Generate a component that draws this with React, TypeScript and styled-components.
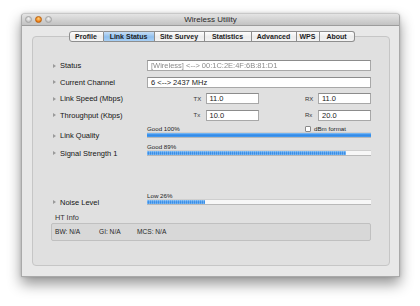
import React from "react";
import styled, { createGlobalStyle } from "styled-components";

const GlobalStyle = createGlobalStyle`
body {
    margin: 0;
    background: #ffffff;
    font-family: "Liberation Sans", Arial, sans-serif;
    color: #222;
}
`;

const Page = styled.div`
padding: 13px 0 0 21px;
width: 420px;
height: 306px;
box-sizing: border-box;
`;

const Window = styled.div`
width: 379px;
height: 264px;
box-sizing: border-box;
display: flex;
flex-direction: column;
background: #e8e8e8;
border: 1px solid #a9a9a9;
border-top-color: #c8c8c8;
border-radius: 4px 4px 0 0;
box-shadow: 0 7px 14px rgba(0, 0, 0, 0.42), 0 0 3px rgba(0, 0, 0, 0.15);
`;

const TitleBar = styled.div`
height: 11px;
flex: none;
display: flex;
align-items: center;
position: relative;
padding-left: 3px;
gap: 3px;
background: linear-gradient(#e4e4e4, #c2c2c2);
border-bottom: 1px solid #9c9c9c;
border-radius: 3px 3px 0 0;
`;

const Light = styled.span<{ $active?: boolean }>`
width: 7px;
height: 7px;
border-radius: 50%;
box-sizing: border-box;
background: ${(p) =>
    p.$active
        ? "radial-gradient(circle at 50% 35%, #ffd27a, #f07a10 70%, #c25a00)"
        : "radial-gradient(circle at 50% 35%, #f4f4f4, #c0c0c0 75%)"};
border: 1px solid ${(p) => (p.$active ? "#b86412" : "#a5a5a5")};
`;

const Title = styled.div`
position: absolute;
left: 0;
right: 0;
top: 0;
text-align: center;
font-size: 8px;
line-height: 11px;
color: #2a2a2a;
`;

const Body = styled.div`
flex: 1;
display: flex;
flex-direction: column;
padding: 5px 9px 10px 10px;
`;

const Tabs = styled.div`
display: flex;
justify-content: center;
position: relative;
z-index: 1;
margin-left: 1px;
`;

const Tab = styled.div<{ $w: number; $active?: boolean }>`
width: ${(p) => p.$w}px;
height: 11px;
box-sizing: border-box;
display: flex;
align-items: center;
justify-content: center;
font-size: 7px;
font-weight: bold;
color: #1e1e1e;
background: ${(p) =>
    p.$active
        ? "linear-gradient(#c6def6, #8fbfee 55%, #a8cff4)"
        : "linear-gradient(#fefefe, #ececec 55%, #f4f4f4)"};
border: 1px solid #8e8e8e;
border-left: none;
&:first-child {
    border-left: 1px solid #8e8e8e;
    border-radius: 3px 0 0 3px;
}
&:last-child {
    border-radius: 0 3px 3px 0;
}
`;

const Group = styled.div`
flex: 1;
margin-top: -6px;
background: #e0e0e0;
border: 1px solid #c6c6c6;
border-radius: 4px;
padding: 23px 18px 0 20px;
`;

const Grid = styled.div`
display: grid;
grid-template-columns: 94px 1fr;
row-gap: 5.5px;
align-items: center;
`;

const Label = styled.div<{ $drop?: number }>`
display: flex;
align-items: center;
gap: 4px;
font-size: 7.5px;
color: #141414;
align-self: ${(p) => (p.$drop !== undefined ? "end" : "center")};
margin-bottom: ${(p) => p.$drop ?? 0}px;
&::before {
    content: "";
    width: 0;
    height: 0;
    border-left: 3px solid #9a9a9a;
    border-top: 2.5px solid transparent;
    border-bottom: 2.5px solid transparent;
}
`;

const Field = styled.div<{ $blur?: boolean }>`
height: 11px;
box-sizing: border-box;
background: #ffffff;
border: 1px solid #a8a8a8;
border-top-color: #8c8c8c;
padding-left: 3px;
font-size: 7.5px;
line-height: 9px;
white-space: nowrap;
overflow: hidden;
color: ${(p) => (p.$blur ? "#8a8a8a" : "#1a1a1a")};
filter: ${(p) => (p.$blur ? "blur(0.55px)" : "none")};
`;

const Pair = styled.div`
display: grid;
grid-template-columns: 1fr 12px 53px 1fr 13px 53px;
align-items: center;
`;

const Small = styled.span`
font-size: 6px;
color: #333;
`;

const Meter = styled.div`
display: flex;
flex-direction: column;
`;

const Caption = styled.div`
display: flex;
justify-content: space-between;
align-items: flex-end;
height: 6px;
line-height: 6px;
font-size: 6.2px;
color: #222;
`;

const Check = styled.span`
display: flex;
align-items: center;
gap: 3px;
margin-right: 25px;
&::before {
    content: "";
    width: 6px;
    height: 6px;
    box-sizing: border-box;
    background: #fff;
    border: 1px solid #8a8a8a;
    border-radius: 1px;
}
`;

const Track = styled.div`
height: 6px;
box-sizing: border-box;
background: #f7f7f7;
border-top: 1px solid #cfcfcf;
border-bottom: 1px solid #b9b9b9;
`;

const Fill = styled.div<{ $pattern?: boolean }>`
height: 100%;
background: ${(p) =>
    p.$pattern
        ? "repeating-linear-gradient(90deg, rgba(255,255,255,0.25) 0 1px, transparent 1px 2px), linear-gradient(#7cbcf6, #2d86e4 50%, #59a6f0)"
        : "linear-gradient(#86c2f8, #2c86e6 50%, #4b9ef0)"};
`;

const Spacer = styled.div<{ $h: number }>`
grid-column: 1 / -1;
height: ${(p) => p.$h}px;
`;

const HtTitle = styled.div`
margin: 8px 0 0 2px;
font-size: 7.3px;
color: #333;
`;

const HtBox = styled.div`
margin: 1px 0 0 -2px;
height: 18px;
box-sizing: border-box;
display: flex;
align-items: center;
padding-left: 3px;
background: #d8d8d8;
border: 1px solid #c0c0c0;
border-radius: 2px;
font-size: 6.6px;
color: #262626;
`;

const HtItem = styled.span<{ $w: number }>`
width: ${(p) => p.$w}px;
`;

const tabs = [
    { name: "Profile", w: 35 },
    { name: "Link Status", w: 51, active: true },
    { name: "Site Survey", w: 50 },
    { name: "Statistics", w: 47 },
    { name: "Advanced", w: 45 },
    { name: "WPS", w: 23 },
    { name: "About", w: 35 },
];

const Bar: React.FC<{ caption: string; value: number; pattern?: boolean; extra?: React.ReactNode }> = ({
    caption,
    value,
    pattern,
    extra,
}) => (
    <Meter>
        <Caption>
            <span>{caption}</span>
            {extra}
        </Caption>
        <Track>
            <Fill $pattern={pattern} style={{ width: `${value}%` }} />
        </Track>
    </Meter>
);

export default function App() {
    return (
        <Page>
            <GlobalStyle />
            <Window>
                <TitleBar>
                    <Light />
                    <Light $active />
                    <Light />
                    <Title>Wireless Utility</Title>
                </TitleBar>
                <Body>
                    <Tabs>
                        {tabs.map((t) => (
                            <Tab key={t.name} $w={t.w} $active={t.active}>
                                {t.name}
                            </Tab>
                        ))}
                    </Tabs>
                    <Group>
                        <Grid>
                            <Label>Status</Label>
                            <Field $blur>{"[Wireless] <--> 00:1C:2E:4F:6B:81:D1"}</Field>

                            <Label>Current Channel</Label>
                            <Field>{"6 <--> 2437 MHz"}</Field>

                            <Label>Link Speed (Mbps)</Label>
                            <Pair>
                                <span />
                                <Small>TX</Small>
                                <Field>11.0</Field>
                                <span />
                                <Small>RX</Small>
                                <Field>11.0</Field>
                            </Pair>

                            <Label>Throughput (Kbps)</Label>
                            <Pair>
                                <span />
                                <Small>Tx</Small>
                                <Field>10.0</Field>
                                <span />
                                <Small>Rx</Small>
                                <Field>20.0</Field>
                            </Pair>

                            <Label $drop={-2}>Link Quality</Label>
                            <Bar caption="Good 100%" value={100} extra={<Check>dBm format</Check>} />

                            <Label $drop={-2}>Signal Strength 1</Label>
                            <Bar caption="Good 89%" value={89} pattern />

                            <Spacer $h={26} />

                            <Label $drop={-2}>Noise Level</Label>
                            <Bar caption="Low 26%" value={26} pattern />
                        </Grid>
                        <HtTitle>HT Info</HtTitle>
                        <HtBox>
                            <HtItem $w={44}>BW: N/A</HtItem>
                            <HtItem $w={38}>GI: N/A</HtItem>
                            <HtItem $w={50}>MCS: N/A</HtItem>
                        </HtBox>
                    </Group>
                </Body>
            </Window>
        </Page>
    );
}
